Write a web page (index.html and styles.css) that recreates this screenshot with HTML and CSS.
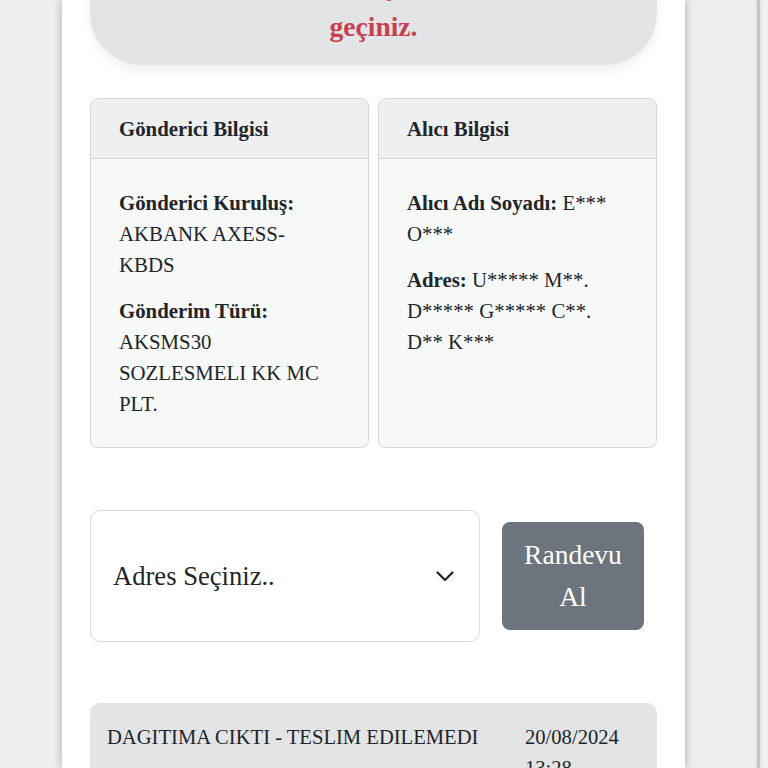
FILE: index.html
```html
<!DOCTYPE html>
<html lang="tr">
<head>
<meta charset="utf-8">
<title>Gönderi Takip</title>
<link rel="stylesheet" href="styles.css">
</head>
<body>
<div class="page">
  <div class="notice">
    <p>Randevu almak için lütfen adres</p>
    <p>geçiniz.</p>
  </div>

  <div class="cards">
    <section class="card">
      <h3 class="card-head">Gönderici Bilgisi</h3>
      <div class="card-body">
        <p><b>Gönderici Kuruluş:</b> AKBANK AXESS-KBDS</p>
        <p><b>Gönderim Türü:</b> AKSMS30 SOZLESMELI KK MC PLT.</p>
      </div>
    </section>
    <section class="card">
      <h3 class="card-head">Alıcı Bilgisi</h3>
      <div class="card-body">
        <p><b>Alıcı Adı Soyadı:</b> E*** O***</p>
        <p><b>Adres:</b> U***** M**. D***** G***** C**. D** K***</p>
      </div>
    </section>
  </div>

  <div class="actions">
    <div class="select">
      <span>Adres Seçiniz..</span>
      <svg class="chev" width="18" height="11" viewBox="0 0 18 11"><polyline points="1.5,1.5 9,9 16.5,1.5" fill="none" stroke="#222" stroke-width="2.2" stroke-linecap="round" stroke-linejoin="round"/></svg>
    </div>
    <button class="btn">Randevu Al</button>
  </div>

  <div class="event">
    <div class="event-text">DAGITIMA CIKTI - TESLIM EDILEMEDI</div>
    <div class="event-date">20/08/2024 13:28</div>
  </div>
</div>
<div class="edge"></div>
</body>
</html>
```
FILE: styles.css
```css
html, body {
  margin: 0;
  padding: 0;
  height: 100%;
  overflow: hidden;
}
body {
  background: #efefef;
  font-family: "Liberation Serif", "Times New Roman", serif;
  color: #212529;
  display: flex;
  align-items: stretch;
}
.page {
  width: 567px;
  margin-left: 62px;
  padding: 0 28px 0 28px;
  background: #fff;
  box-shadow: 0 0 10px rgba(0,0,0,0.28);
  min-height: 100%;
}
.edge {
  margin-left: 72px;
  width: 3px;
  background: #c4c4c4;
  box-shadow: 0 0 3px rgba(0,0,0,0.15);
}
.notice {
  margin-top: -59px;
  background: #e3e4e6;
  border-radius: 0 0 52px 52px;
  padding: 24px 28px 18px;
  text-align: center;
  box-shadow: 0 6px 12px rgba(0,0,0,0.06);
}
.notice p {
  margin: 0;
  color: #c9404d;
  font-weight: bold;
  font-size: 27.5px;
  line-height: 41px;
}
.cards {
  margin-top: 33px;
  display: grid;
  grid-template-columns: 1fr 1fr;
  gap: 9px;
}
.card {
  border: 1px solid #d4d5d6;
  border-radius: 8px;
  background: #f7f8f8;
  overflow: hidden;
  height: 348px;
}
.card-head {
  margin: 0;
  background: #eeeff0;
  border-bottom: 1px solid #d4d5d6;
  padding: 14px 28px;
  font-size: 20.8px;
  line-height: 31px;
  font-weight: bold;
}
.card-body {
  padding: 28px 28px;
  display: flex;
  flex-direction: column;
  gap: 15px;
}
.card-body p {
  margin: 0;
  font-size: 20.8px;
  line-height: 31px;
}
.actions {
  margin-top: 62px;
  display: flex;
  align-items: center;
  gap: 22px;
}
.select {
  width: 390px;
  height: 132px;
  box-sizing: border-box;
  border: 1px solid #dcdcdc;
  border-radius: 10px;
  background: #fff;
  display: flex;
  align-items: center;
  justify-content: space-between;
  padding: 0 25px 0 22px;
  font-size: 26.6px;
  color: #212529;
}
.chev { display: block; }
.btn {
  width: 142px;
  height: 108px;
  border: none;
  border-radius: 8px;
  background: #6c757d;
  color: #fff;
  font-family: "Liberation Serif", "Times New Roman", serif;
  font-size: 27.5px;
  line-height: 42px;
  padding: 0 20px;
}
.event {
  margin-top: 61px;
  background: #e3e4e6;
  border-radius: 10px;
  padding: 19px 36px 20px 17px;
  display: flex;
  justify-content: space-between;
  font-size: 20.6px;
  line-height: 31px;
  color: #212529;
}
.event-date {
  width: 96px;
}
```
